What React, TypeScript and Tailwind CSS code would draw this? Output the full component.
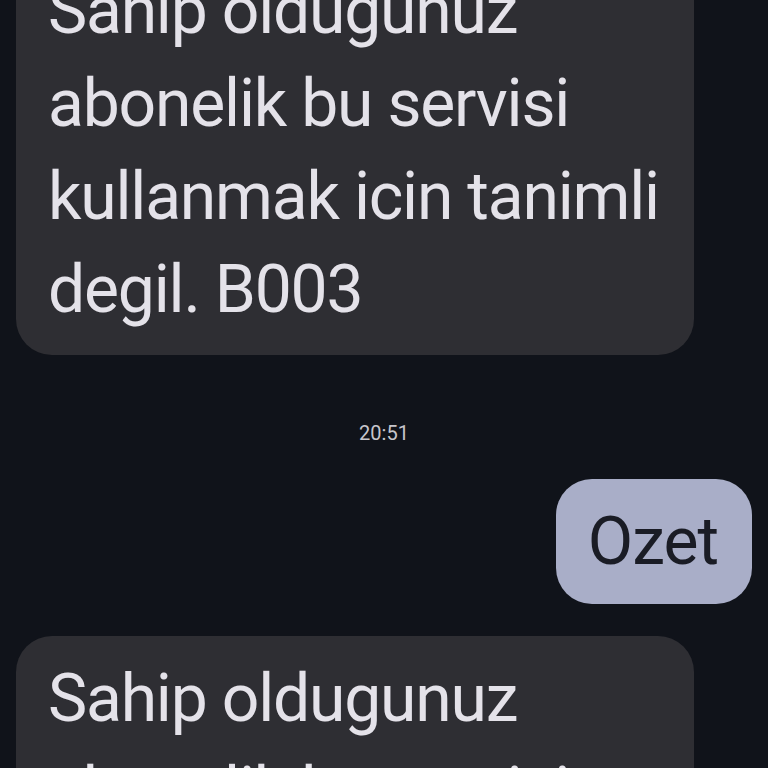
export default function App() {
  return (
    <div
      className="w-[768px] h-[768px] overflow-hidden bg-[#10131a]"
      style={{ fontFamily: 'Roboto, "Noto Sans", sans-serif' }}
    >
      <div className="flex flex-col -mt-[52px]">
        {/* Received */}
        <div className="ml-4 w-[678px] whitespace-nowrap rounded-[36px] bg-[#2e2e33] pl-8 pr-6 pt-4 pb-[19px] text-[66px] leading-[93px] tracking-[-1.2px] text-[#e4e2e9]">
          Sahip oldugunuz
          <br />
          abonelik bu servisi
          <br />
          kullanmak icin tanimli
          <br />
          degil. B003
        </div>

        {/* Timestamp */}
        <div className="mt-[66px] text-center text-[20px] leading-6 text-[#c7c6cc]">20:51</div>

        {/* Sent */}
        <div className="mt-[34px] flex justify-end pr-4">
          <div className="rounded-[36px] bg-[#a9aec8] pl-8 pr-[34px] py-4 text-[66px] leading-[93px] tracking-[-1px] text-[#1a1c25]">
            Ozet
          </div>
        </div>

        {/* Received */}
        <div className="mt-8 ml-4 w-[678px] whitespace-nowrap rounded-[36px] bg-[#2e2e33] pl-8 pr-6 pt-4 pb-[19px] text-[66px] leading-[93px] tracking-[-1.2px] text-[#e4e2e9]">
          Sahip oldugunuz
          <br />
          abonelik bu servisi
          <br />
          kullanmak icin tanimli
          <br />
          degil. B003
        </div>
      </div>
    </div>
  );
}
